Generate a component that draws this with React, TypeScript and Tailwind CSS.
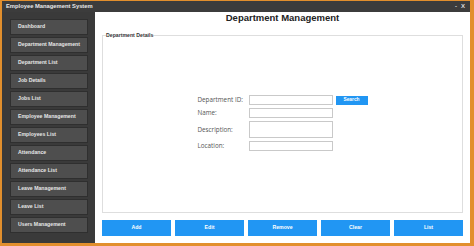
import React from "react";

const navItems = [
  "Dashboard",
  "Department Management",
  "Department List",
  "Job Details",
  "Jobs List",
  "Employee Management",
  "Employees List",
  "Attendance",
  "Attendance List",
  "Leave Management",
  "Leave List",
  "Users Management",
];

const actions = ["Add", "Edit", "Remove", "Clear", "List"];

function Field({ label, tall }: { label: string; tall?: boolean }) {
  return (
    <>
      <div className="flex items-center whitespace-nowrap font-['Open_Sans',sans-serif] text-[6.3px] text-[#555]">{label}</div>
      <div className={`${tall ? "h-[17px]" : "h-[10px]"} w-[84px] border border-[#c9c9c9] bg-white`} />
    </>
  );
}

export default function App() {
  return (
    <div className="flex h-[246px] w-[474px] flex-col bg-[#e28f2d] pb-[3px] pl-[2px] pr-[4px] pt-[1px] font-['Liberation_Sans',Arial,sans-serif]">
      {/* title bar */}
      <div className="flex h-[11px] shrink-0 items-center justify-between bg-[#3c3c3c] pl-[4px] pr-[5px]">
        <span className="whitespace-nowrap text-[5.8px] font-bold text-[#e8e8e8]">Employee Management System</span>
        <div className="flex gap-[4px] text-[6px] font-bold text-[#ddd]">
          <span>-</span>
          <span>X</span>
        </div>
      </div>
      <div className="flex min-h-0 flex-1">
        {/* sidebar */}
        <div className="flex w-[93px] shrink-0 flex-col gap-[2px] bg-[#3a3a3a] pl-[8px] pr-[7px] pt-[7px]">
          {navItems.map((item) => (
            <div
              key={item}
              className="flex h-[16px] items-center whitespace-nowrap border border-[#2f2f2f] bg-[#4e4e4e] pl-[7px] text-[5.2px] font-bold text-[#e6e6e6]"
            >
              {item}
            </div>
          ))}
        </div>
        {/* main */}
        <div className="flex flex-1 flex-col bg-white px-[7px] pb-[7px]">
          <h1 className="h-[20px] text-center text-[9.5px] font-bold leading-[12px] text-[#222]">Department Management</h1>
          <fieldset className="flex-1 border border-[#dedede] px-[2px] pt-0">
            <legend className="ml-[1px] px-0 text-[5.2px] font-bold leading-[6px] text-[#333]">Department Details</legend>
            <div className="flex justify-center pt-[57px]">
              <div className="grid grid-cols-[48px_84px_auto] items-center gap-x-[3px] gap-y-[3px]">
                <Field label="Department ID:" />
                <div className="flex h-[9px] w-[32px] items-center justify-center bg-[#2196f3] text-[4.8px] font-bold text-white">
                  Search
                </div>
                <Field label="Name:" />
                <div />
                <Field label="Description:" tall />
                <div />
                <Field label="Location:" />
                <div />
              </div>
            </div>
          </fieldset>
          <div className="mt-[7px] flex h-[16px] gap-[4px]">
            {actions.map((a) => (
              <div
                key={a}
                className="flex flex-1 items-center justify-center bg-[#2196f3] text-[5.2px] font-bold text-white"
              >
                {a}
              </div>
            ))}
          </div>
        </div>
      </div>
    </div>
  );
}
